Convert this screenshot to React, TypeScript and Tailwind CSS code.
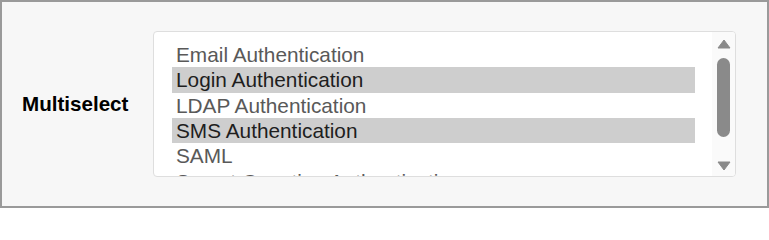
const options = [
  { label: 'Email Authentication', selected: false },
  { label: 'Login Authentication', selected: true },
  { label: 'LDAP Authentication', selected: false },
  { label: 'SMS Authentication', selected: true },
  { label: 'SAML', selected: false },
  { label: 'Secret Question Authentication', selected: false },
  { label: 'Token Authentication', selected: false },
]

export default function App() {
  return (
    <div
      className="h-[208px] w-[769px] bg-[#f7f7f7] border-2 border-[#9a9a9a] flex items-center"
      style={{ fontFamily: '"Liberation Sans", Arial, sans-serif' }}
    >
      <div className="w-[151px] pl-[20px] pt-[1px] text-[20.6px] font-bold text-black">Multiselect</div>
      <div className="flex h-[146px] w-[583px] bg-white border border-[#dedede] rounded-[4px] overflow-hidden">
        <div className="flex-1 overflow-hidden pt-[10px] pl-[18px] pr-[17px]">
          {options.map((o) => (
            <div
              key={o.label}
              className={`h-[25.33px] leading-[25.33px] pl-[4px] text-[20.8px] whitespace-nowrap ${
                o.selected ? 'bg-[#cecece] text-[#1e1e1e]' : 'text-[#595959]'
              }`}
            >
              {o.label}
            </div>
          ))}
        </div>
        {/* scrollbar */}
        <div className="w-[23px] bg-[#fafafa] flex flex-col items-center pt-[7px] pb-[5px]">
          <svg width="14" height="10" viewBox="0 0 14 10" className="shrink-0">
            <path d="M7 1 L13 9 H1 Z" fill="#8a8a8a" stroke="#8a8a8a" strokeLinejoin="round" />
          </svg>
          <div className="mt-[9px] h-[79px] w-[13px] rounded-full bg-[#8a8a8a]" />
          <div className="flex-1" />
          <svg width="14" height="10" viewBox="0 0 14 10" className="shrink-0">
            <path d="M1 1 H13 L7 9 Z" fill="#8a8a8a" stroke="#8a8a8a" strokeLinejoin="round" />
          </svg>
        </div>
      </div>
    </div>
  )
}
